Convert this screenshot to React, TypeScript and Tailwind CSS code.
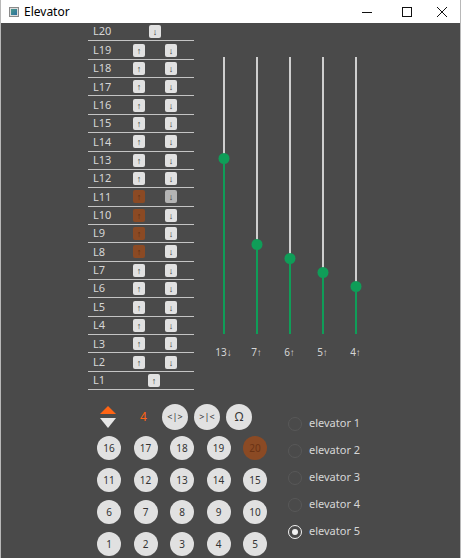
import React from 'react'

const font = { fontFamily: '"Noto Sans", "Open Sans", sans-serif' }

const floors = Array.from({ length: 20 }, (_, i) => 20 - i)
const upActive = [11, 10, 9, 8]
const downPressed = [11]

const cars = [
  { value: 13, dir: '↓' },
  { value: 7, dir: '↑' },
  { value: 6, dir: '↑' },
  { value: 5, dir: '↑' },
  { value: 4, dir: '↑' },
]

function ArrowBtn({ glyph, tone = 'normal' }: { glyph: string; tone?: 'normal' | 'active' | 'pressed' }) {
  const bg =
    tone === 'active' ? 'bg-[#8b4a24] text-[#5a2a10]' : tone === 'pressed' ? 'bg-[#b4b4b4] text-[#333]' : 'bg-[#e1e1e1] text-[#333]'
  return (
    <div className={`flex h-[13px] w-[12px] items-center justify-center rounded-[2px] text-[9px] leading-none ${bg}`}>
      {glyph}
    </div>
  )
}

function FloorList() {
  return (
    <div className="flex w-[106px] flex-col">
      {floors.map((f) => (
        <div key={f} className="flex h-[18.37px] items-center border-b border-[#c4c4c4]">
          <span className="w-[45px] pl-[5px] text-[11px] text-[#d6d6d6]">L{f}</span>
          {f === 20 ? (
            <div className="ml-[16px]">
              <ArrowBtn glyph="↓" />
            </div>
          ) : f === 1 ? (
            <div className="ml-[15px]">
              <ArrowBtn glyph="↑" />
            </div>
          ) : (
            <div className="flex gap-[20px]">
              <ArrowBtn glyph="↑" tone={upActive.includes(f) ? 'active' : 'normal'} />
              <ArrowBtn glyph="↓" tone={downPressed.includes(f) ? 'pressed' : 'normal'} />
            </div>
          )}
        </div>
      ))}
    </div>
  )
}

function Sliders() {
  return (
    <div className="flex pl-[13px] pt-[34px]">
      {cars.map((c, i) => {
        // thumb centre measured from the track top
        const pos = 272.5 - (c.value - 1) * 14.22
        return (
          <div key={i} className="flex w-[33px] flex-col items-center">
            <div className="relative flex h-[277px] w-[2px] flex-col">
              <div className="bg-[#cfcfcf]" style={{ height: pos }} />
              <div className="flex-1 bg-[#0f9d58]" />
              <div
                className="absolute left-1/2 h-[11px] w-[11px] -translate-x-1/2 rounded-full bg-[#0f9d58]"
                style={{ top: pos - 5.5 }}
              />
            </div>
            <span className="mt-[11px] text-[10px] text-[#d6d6d6]">
              {c.value}
              {c.dir}
            </span>
          </div>
        )
      })}
    </div>
  )
}

function Circle({ label, active = false }: { label: string; active?: boolean }) {
  return (
    <div
      className={`flex h-[24px] w-[24px] items-center justify-center rounded-full text-[10px] leading-none ${
        active ? 'bg-[#8b4a24] text-[#6a3214]' : 'bg-[#e1e1e1] text-[#333]'
      }`}
    >
      {label}
    </div>
  )
}

function Controls() {
  const rows = [
    [16, 17, 18, 19, 20],
    [11, 12, 13, 14, 15],
    [6, 7, 8, 9, 10],
    [1, 2, 3, 4, 5],
  ]
  return (
    <div className="flex w-[170px] flex-col">
      <div className="flex h-[24px] items-center">
        <div className="ml-[3px] flex flex-col gap-[4px]">
          <div className="h-0 w-0 border-x-[8px] border-b-[8px] border-x-transparent border-b-[#ff6414]" />
          <div className="h-0 w-0 border-x-[8px] border-t-[10px] border-x-transparent border-t-[#e6e6e6]" />
        </div>
        <span className="ml-[24px] w-[22px] text-[12px] text-[#ff6414]">4</span>
        <div className="flex gap-[6px]">
          <div className="flex h-[26px] w-[26px] items-center justify-center rounded-full bg-[#e1e1e1] text-[9px] text-[#333]">
            {'<|>'}
          </div>
          <div className="flex h-[26px] w-[26px] items-center justify-center rounded-full bg-[#e1e1e1] text-[9px] text-[#333]">
            {'>|<'}
          </div>
          <div className="flex h-[26px] w-[26px] items-center justify-center rounded-full bg-[#e1e1e1] text-[12px] text-[#333]">
            Ω
          </div>
        </div>
      </div>
      <div className="mt-[7px] grid grid-cols-5 gap-x-[12.5px] gap-y-[8px]">
        {rows.flat().map((n) => (
          <Circle key={n} label={String(n)} active={n === 20} />
        ))}
      </div>
    </div>
  )
}

function Radios() {
  return (
    <div className="ml-[21px] flex flex-col pt-[12px]">
      {[1, 2, 3, 4, 5].map((n) => (
        <div key={n} className="flex h-[27px] items-start">
          <div
            className={`flex h-[14px] w-[14px] items-center justify-center rounded-full border-[1.5px] ${
              n === 5 ? 'border-[#f2f2f2]' : 'border-[#585858]'
            }`}
          >
            {n === 5 && <div className="h-[6px] w-[6px] rounded-full bg-[#f2f2f2]" />}
          </div>
          <span className="ml-[7px] -mt-[2px] text-[11px] text-[#d6d6d6]">elevator {n}</span>
        </div>
      ))}
    </div>
  )
}

function TitleBar() {
  return (
    <div className="flex h-[23px] items-center bg-white">
      <div className="ml-[8px] flex h-[10px] w-[10px] items-center justify-center border border-[#8a8a8a] bg-[#dcdcdc]">
        <div className="h-[6px] w-[6px] bg-gradient-to-br from-[#4c9a8a] to-[#2c6e9e]" />
      </div>
      <span className="ml-[5px] text-[12px] text-black" style={{ fontFamily: '"Noto Sans", sans-serif' }}>
        Elevator
      </span>
      <div className="ml-auto flex items-center">
        <svg width="46" height="23" viewBox="0 0 46 23">
          <line x1="18" y1="12.5" x2="28" y2="12.5" stroke="#111" strokeWidth="1" />
        </svg>
        <svg width="34" height="23" viewBox="0 0 34 23">
          <rect x="12.5" y="7.5" width="9" height="9" fill="none" stroke="#111" strokeWidth="1" />
        </svg>
        <svg width="36" height="23" viewBox="0 0 36 23">
          <path d="M13 7 L23 17 M23 7 L13 17" stroke="#111" strokeWidth="1" />
        </svg>
      </div>
    </div>
  )
}

export default function App() {
  return (
    <div className="flex h-[558px] w-[461px] flex-col overflow-hidden border-x border-[#b8b8b8] bg-[#4a4a4a]" style={font}>
      <TitleBar />
      <div className="ml-[87px] flex">
        <FloorList />
        <Sliders />
      </div>
      <div className="mt-[14.6px] flex pl-[96px]">
        <Controls />
        <Radios />
      </div>
    </div>
  )
}
